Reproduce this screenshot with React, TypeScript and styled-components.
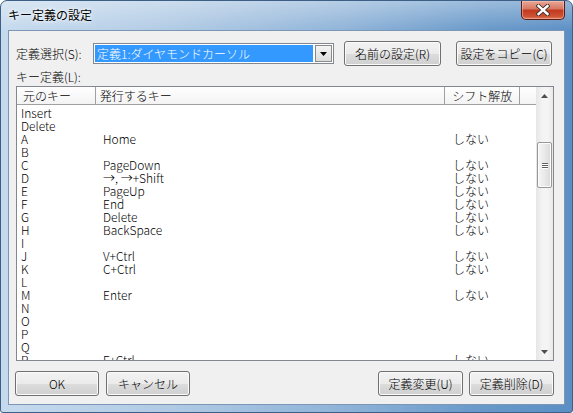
import React from "react";
import styled, { createGlobalStyle } from "styled-components";

const GlobalStyle = createGlobalStyle`
  html, body {
    margin: 0;
    padding: 0;
    background: #ffffff;
  }
  body {
    font-family: "Noto Sans CJK JP", "Liberation Sans", sans-serif;
    font-size: 12px;
    font-weight: 300;
    color: #000;
  }
`;

const Frame = styled.div`
  width: 573px;
  height: 413px;
  box-sizing: border-box;
  display: flex;
  flex-direction: column;
  border: 1px solid #3d5f86;
  border-radius: 7px 7px 3px 3px;
  padding: 0 7px 7px;
  overflow: hidden;
  background:
    linear-gradient(to bottom, rgba(255, 255, 255, 0.35), rgba(255, 255, 255, 0) 30px),
    linear-gradient(to right, #c6daee 0%, #b0cae4 30%, #8fb3d8 60%, #6798c9 85%, #5b8fc4 100%);
`;

const TitleBar = styled.div`
  height: 29px;
  display: flex;
  align-items: flex-start;
`;

const Title = styled.div`
  font-size: 12px;
  font-weight: 400;
  line-height: 16px;
  margin-top: 6px;
  color: #000;
  text-shadow: 0 0 6px #ffffff, 0 0 3px #ffffff;
`;

const CloseBox = styled.div`
  margin-left: auto;
  width: 44px;
  height: 19px;
  box-sizing: border-box;
  border: 1px solid #5a1d13;
  border-top: none;
  border-radius: 0 0 5px 5px;
  display: flex;
  align-items: center;
  justify-content: center;
  background: linear-gradient(to bottom, #e9a796 0%, #d77a63 42%, #c23a20 52%, #cd5234 85%, #e27a5c 100%);
  box-shadow: inset 0 0 0 1px rgba(255, 210, 200, 0.45);
`;

const Client = styled.div`
  flex: 1;
  box-sizing: border-box;
  border: 1px solid #7c97b6;
  background: #f0f0f0;
  display: flex;
  flex-direction: column;
  padding: 10px 10px 8px 7px;
`;

const Row = styled.div`
  height: 25px;
  display: flex;
  align-items: center;
  flex-shrink: 0;
`;

const Label = styled.div<{ $w?: number }>`
  width: ${(p) => (p.$w ? `${p.$w}px` : "auto")};
  line-height: 16px;
  white-space: nowrap;
`;

const Combo = styled.div`
  width: 241px;
  height: 21px;
  box-sizing: border-box;
  border: 1px solid #828790;
  background: #fff;
  display: flex;
  align-items: center;
  padding: 0 1px 0 1px;
`;

const ComboValue = styled.div`
  flex: 1;
  height: 17px;
  line-height: 17px;
  background: #3399ff;
  color: #fff;
  padding-left: 2px;
  white-space: nowrap;
  overflow: hidden;
`;

const ComboArrow = styled.div`
  width: 17px;
  height: 17px;
  margin-left: 2px;
  box-sizing: border-box;
  border: 1px solid #8a8a8a;
  background: linear-gradient(to bottom, #f4f4f4, #dcdcdc);
  display: flex;
  align-items: center;
  justify-content: center;
`;

const Button = styled.div<{ $w: number; $ml?: number }>`
  width: ${(p) => p.$w}px;
  height: 25px;
  margin-left: ${(p) => p.$ml ?? 0}px;
  box-sizing: border-box;
  border: 1px solid #707070;
  border-radius: 3px;
  background: linear-gradient(to bottom, #f2f2f2 0%, #ebebeb 50%, #dddddd 51%, #cfcfcf 100%);
  box-shadow: inset 0 0 0 1px #fbfbfb;
  display: flex;
  align-items: center;
  justify-content: center;
  white-space: nowrap;
  flex-shrink: 0;
`;

const SectionLabel = styled.div`
  height: 20px;
  box-sizing: border-box;
  padding-top: 3px;
  line-height: 16px;
  flex-shrink: 0;
`;

const ListView = styled.div`
  height: 275px;
  box-sizing: border-box;
  border: 1px solid #828790;
  background: #fff;
  display: flex;
  flex-shrink: 0;
`;

const ListMain = styled.div`
  flex: 1;
  display: flex;
  flex-direction: column;
  overflow: hidden;
`;

const Header = styled.div`
  height: 18px;
  box-sizing: border-box;
  display: flex;
  border-bottom: 1px solid #a0a0a0;
  background: linear-gradient(to bottom, #ffffff, #f3f3f3);
  flex-shrink: 0;
`;

const HeaderCell = styled.div<{ $w: number; $pl: number; $last?: boolean }>`
  width: ${(p) => p.$w}px;
  box-sizing: border-box;
  padding-left: ${(p) => p.$pl}px;
  line-height: 17px;
  border-right: ${(p) => (p.$last ? "none" : "1px solid #a0a0a0")};
  white-space: nowrap;
`;

const Body = styled.div`
  flex: 1;
  padding-top: 1px;
  overflow: hidden;
`;

const ItemRow = styled.div`
  display: flex;
  height: 13px;
  line-height: 13px;
  white-space: nowrap;
`;

const Cell = styled.div<{ $w: number; $pl: number }>`
  width: ${(p) => p.$w}px;
  box-sizing: border-box;
  padding-left: ${(p) => p.$pl}px;
`;

const ScrollBar = styled.div`
  width: 17px;
  display: flex;
  flex-direction: column;
  background: linear-gradient(to right, #e6e6e6, #f4f4f4 40%, #f4f4f4 70%, #e9e9e9);
`;

const ScrollArrow = styled.div`
  height: 17px;
  display: flex;
  align-items: center;
  justify-content: center;
`;

const Track = styled.div`
  flex: 1;
  display: flex;
  flex-direction: column;
  align-items: center;
`;

const Thumb = styled.div`
  width: 15px;
  height: 46px;
  margin-top: 38px;
  box-sizing: border-box;
  border: 1px solid #979797;
  border-radius: 2px;
  background: linear-gradient(to right, #f5f5f5, #e9e9e9 50%, #d9d9d9);
  box-shadow: inset 0 0 0 1px #fcfcfc;
  display: flex;
  flex-direction: column;
  align-items: center;
  justify-content: center;
  gap: 1px;
`;

const Grip = styled.div`
  width: 6px;
  height: 1px;
  background: #5e5e5e;
  box-shadow: 0 1px 0 #ffffff;
`;

const Spacer = styled.div`
  flex: 1;
`;

const BottomRow = styled(Row)`
  margin-top: 10px;
`;

type Item = [string, string, string];

const items: Item[] = [
  ["Insert", "", ""],
  ["Delete", "", ""],
  ["A", "Home", "しない"],
  ["B", "", ""],
  ["C", "PageDown", "しない"],
  ["D", "→, →+Shift", "しない"],
  ["E", "PageUp", "しない"],
  ["F", "End", "しない"],
  ["G", "Delete", "しない"],
  ["H", "BackSpace", "しない"],
  ["I", "", ""],
  ["J", "V+Ctrl", "しない"],
  ["K", "C+Ctrl", "しない"],
  ["L", "", ""],
  ["M", "Enter", "しない"],
  ["N", "", ""],
  ["O", "", ""],
  ["P", "", ""],
  ["Q", "", ""],
  ["R", "F+Ctrl", "しない"],
];

const Tri = ({ down, color = "#4d4d4d" }: { down?: boolean; color?: string }) => (
  <svg width="7" height="4" viewBox="0 0 7 4">
    {down ? <path d="M0 0 H7 L3.5 4 Z" fill={color} /> : <path d="M0 4 H7 L3.5 0 Z" fill={color} />}
  </svg>
);

const App = (): JSX.Element => {
  return (
    <React.Fragment>
      <GlobalStyle />
      <Frame>
        <TitleBar>
          <Title>キー定義の設定</Title>
          <CloseBox>
            <svg width="14" height="12" viewBox="0 0 14 12">
              <path d="M2.5 2 L11.5 10 M11.5 2 L2.5 10" stroke="#3b2a28" strokeWidth="4.2" strokeLinecap="square" />
              <path d="M2.5 2 L11.5 10 M11.5 2 L2.5 10" stroke="#ffffff" strokeWidth="2.4" strokeLinecap="square" />
            </svg>
          </CloseBox>
        </TitleBar>
        <Client>
          <Row>
            <Label $w={77}>定義選択(S):</Label>
            <Combo>
              <ComboValue>定義1:ダイヤモンドカーソル</ComboValue>
              <ComboArrow>
                <Tri down color="#000" />
              </ComboArrow>
            </Combo>
            <Button $w={97} $ml={10}>名前の設定(R)</Button>
            <Button $w={96} $ml={15}>設定をコピー(C)</Button>
          </Row>
          <SectionLabel>キー定義(L):</SectionLabel>
          <ListView>
            <ListMain>
              <Header>
                <HeaderCell $w={79} $pl={6}>元のキー</HeaderCell>
                <HeaderCell $w={350} $pl={4}>発行するキー</HeaderCell>
                <HeaderCell $w={75} $pl={7}>シフト解放</HeaderCell>
                <HeaderCell $w={16} $pl={0} $last />
              </Header>
              <Body>
                {items.map(([k, v, s]) => (
                  <ItemRow key={k + v}>
                    <Cell $w={79} $pl={4}>{k}</Cell>
                    <Cell $w={350} $pl={7}>{v}</Cell>
                    <Cell $w={75} $pl={7}>{s}</Cell>
                  </ItemRow>
                ))}
              </Body>
            </ListMain>
            <ScrollBar>
              <ScrollArrow>
                <Tri />
              </ScrollArrow>
              <Track>
                <Thumb>
                  <Grip />
                  <Grip />
                  <Grip />
                </Thumb>
              </Track>
              <ScrollArrow>
                <Tri down />
              </ScrollArrow>
            </ScrollBar>
          </ListView>
          <BottomRow>
            <Button $w={84} $ml={-1}>OK</Button>
            <Button $w={84} $ml={7}>キャンセル</Button>
            <Spacer />
            <Button $w={85}>定義変更(U)</Button>
            <Button $w={85} $ml={6}>定義削除(D)</Button>
          </BottomRow>
        </Client>
      </Frame>
    </React.Fragment>
  );
};

export default App;
